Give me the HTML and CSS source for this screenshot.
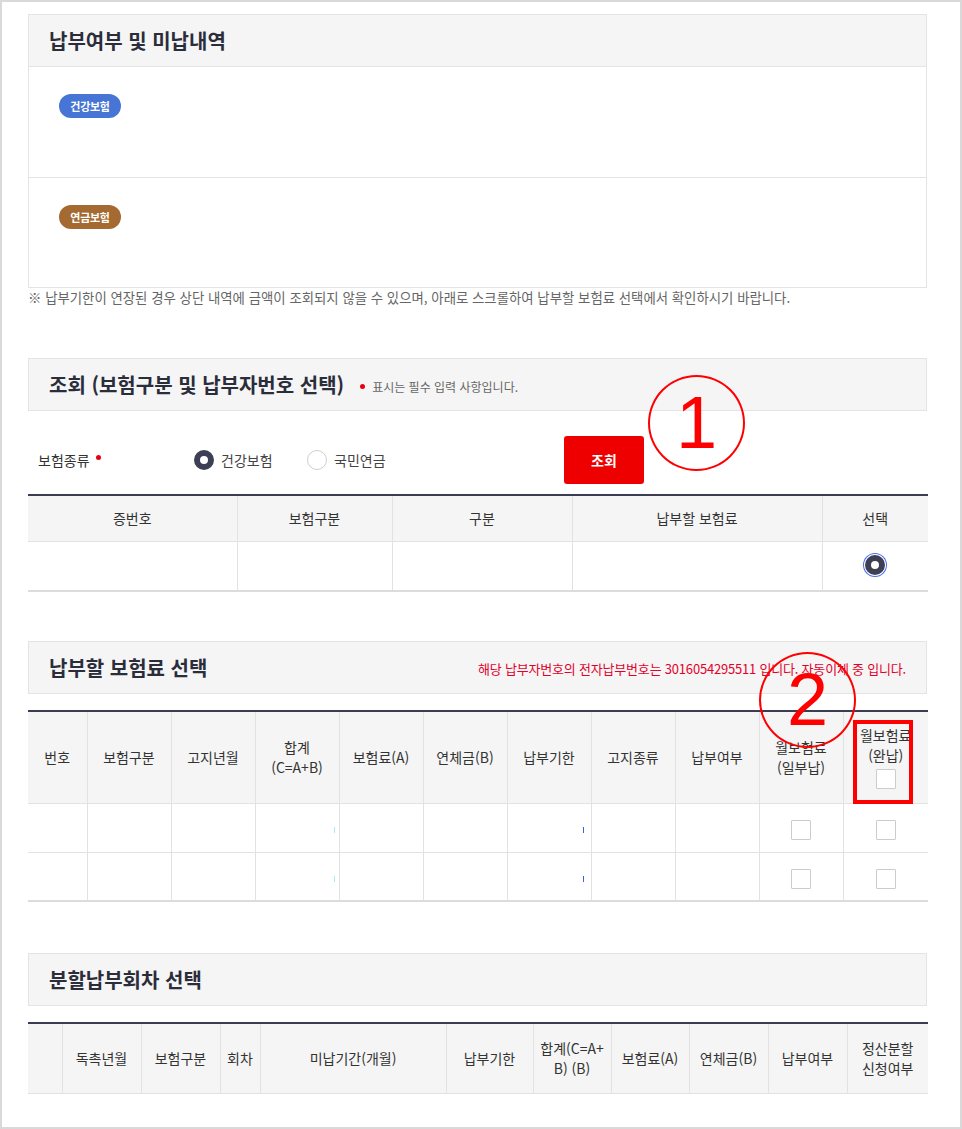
FILE: index.html
```html
<!DOCTYPE html>
<html lang="ko">
<head>
  <meta charset="UTF-8">
  <title>납부여부 및 미납내역</title>
  <link rel="stylesheet" href="styles.css">
</head>
<body>
  <div class="page">

    <!-- 납부여부 및 미납내역 -->
    <div class="sec-head">
      <h2 class="sec-title">납부여부 및 미납내역</h2>
    </div>
    <div class="status-box">
      <div class="status-row"><span class="badge health">건강보험</span></div>
      <div class="status-row"><span class="badge pension">연금보험</span></div>
    </div>
    <p class="note">※ 납부기한이 연장된 경우 상단 내역에 금액이 조회되지 않을 수 있으며, 아래로 스크롤하여 납부할 보험료 선택에서 확인하시기 바랍니다.</p>

    <!-- 조회 -->
    <div class="sec-head sec-search">
      <h2 class="sec-title">조회 (보험구분 및 납부자번호 선택)</h2>
      <span class="req-note"><i class="req-dot"></i>표시는 필수 입력 사항입니다.</span>
    </div>
    <div class="search-row">
      <div class="field-label">보험종류<i class="req-dot"></i></div>
      <label class="radio-item"><span class="radio checked"></span>건강보험</label>
      <label class="radio-item"><span class="radio"></span>국민연금</label>
      <button class="btn-search" type="button">조회</button>
    </div>
    <table class="grid grid-select">
      <colgroup>
        <col style="width:209px"><col style="width:155px"><col style="width:180px"><col style="width:250px"><col>
      </colgroup>
      <thead>
        <tr><th>증번호</th><th>보험구분</th><th>구분</th><th>납부할 보험료</th><th>선택</th></tr>
      </thead>
      <tbody>
        <tr><td></td><td></td><td></td><td></td><td><span class="radio checked focused"></span></td></tr>
      </tbody>
    </table>

    <!-- 납부할 보험료 선택 -->
    <div class="sec-head sec-pay">
      <h2 class="sec-title">납부할 보험료 선택</h2>
      <span class="pay-info">해당 납부자번호의 전자납부번호는 3016054295511 입니다. 자동이체 중 입니다.</span>
    </div>
    <table class="grid grid-pay">
      <colgroup>
        <col style="width:59px"><col style="width:84px"><col style="width:84px"><col style="width:84px"><col style="width:84px"><col style="width:84px"><col style="width:84px"><col style="width:84px"><col style="width:84px"><col style="width:84px"><col>
      </colgroup>
      <thead>
        <tr>
          <th>번호</th><th>보험구분</th><th>고지년월</th><th>합계<br>(C=A+B)</th><th>보험료(A)</th><th>연체금(B)</th>
          <th>납부기한</th><th>고지종류</th><th>납부여부</th><th>월보험료<br>(일부납)</th>
          <th>월보험료<br>(완납)<br><span class="check head-check"></span></th>
        </tr>
      </thead>
      <tbody>
        <tr><td></td><td></td><td></td><td class="num"><i class="tick light"></i></td><td></td><td></td><td class="num due"><i class="tick"></i></td><td></td><td></td><td><span class="check"></span></td><td><span class="check"></span></td></tr>
        <tr><td></td><td></td><td></td><td class="num"><i class="tick light"></i></td><td></td><td></td><td class="num due"><i class="tick"></i></td><td></td><td></td><td><span class="check"></span></td><td><span class="check"></span></td></tr>
      </tbody>
    </table>

    <!-- 분할납부회차 선택 -->
    <div class="sec-head sec-split">
      <h2 class="sec-title">분할납부회차 선택</h2>
    </div>
    <table class="grid grid-split">
      <colgroup>
        <col style="width:34px"><col style="width:79px"><col style="width:79px"><col style="width:40px"><col style="width:186px"><col style="width:87px"><col style="width:78px"><col style="width:78px"><col style="width:79px"><col style="width:79px"><col>
      </colgroup>
      <thead>
        <tr>
          <th></th><th>독촉년월</th><th>보험구분</th><th>회차</th><th>미납기간(개월)</th><th>납부기한</th>
          <th>합계(C=A+<br>B) (B)</th><th>보험료(A)</th><th>연체금(B)</th><th>납부여부</th><th>정산분할<br>신청여부</th>
        </tr>
      </thead>
    </table>

    <!-- 안내 표시 -->
    <div class="mark mark-1">1</div>
    <div class="mark mark-2">2</div>
    <div class="mark-box"></div>
  </div>
</body>
</html>
```

FILE: styles.css
```css
* {
  box-sizing: border-box;
}

body {
  margin: 0;
  font-family: "Noto Sans CJK KR", "Noto Sans", sans-serif;
  color: #333333;
  background: #ffffff;
}

.page {
  position: relative;
  width: 962px;
  height: 1129px;
  border: 2px solid #d9d9d9;
  padding: 12px 33px 0 26px;
  overflow: hidden;
}

/* 섹션 헤더 */
.sec-head {
  display: flex;
  align-items: center;
  height: 53px;
  padding: 0 20px;
  background: #f5f5f5;
  border: 1px solid #e4e4e4;
}

.sec-title {
  margin: 0;
  font-size: 20px;
  font-weight: 700;
  color: #2b2d3a;
}

/* 납부여부 및 미납내역 */
.status-box {
  border: 1px solid #e4e4e4;
  border-top: none;
}

.status-row {
  height: 110px;
  padding: 25px 0 0 30px;
}

.status-row + .status-row {
  border-top: 1px solid #e4e4e4;
}

.badge {
  display: inline-flex;
  align-items: center;
  justify-content: center;
  width: 62px;
  height: 24px;
  border-radius: 12px;
  font-size: 11px;
  font-weight: 700;
  color: #ffffff;
  letter-spacing: -0.3px;
}

.badge.health {
  background: #4775d6;
}

.badge.pension {
  background: #a46a31;
}

.note {
  margin: 0;
  font-size: 13.4px;
  line-height: 18px;
  color: #666666;
}

/* 조회 */
.sec-search {
  margin-top: 52px;
}

.req-note {
  display: flex;
  align-items: center;
  margin-left: 16px;
  padding-top: 3px;
  font-size: 12px;
  color: #666666;
}

.req-dot {
  display: inline-block;
  width: 5px;
  height: 5px;
  border-radius: 50%;
  background: #e60012;
  margin-right: 7px;
}

.search-row {
  display: flex;
  align-items: center;
  height: 83px;
  padding: 15px 0 0 10px;
}

.field-label {
  display: flex;
  align-items: flex-start;
  width: 156px;
  font-size: 14px;
  color: #333333;
}

.field-label .req-dot {
  margin: 5px 0 0 6px;
}

.radio-item {
  display: flex;
  align-items: center;
  gap: 7px;
  width: 113px;
  font-size: 14px;
  color: #444444;
}

.radio {
  display: inline-block;
  width: 20px;
  height: 20px;
  border: 1px solid #cfcfcf;
  border-radius: 50%;
  background: #ffffff;
}

.radio.checked {
  border: 6px solid #3d3f55;
  background: #ffffff;
}

.radio.focused {
  box-shadow: 0 0 0 1px #ffffff, 0 0 0 2px #4a6cf5;
}

.btn-search {
  margin-left: 144px;
  width: 80px;
  height: 48px;
  border: none;
  border-radius: 3px;
  background: #ee0000;
  color: #ffffff;
  font-family: inherit;
  font-size: 14px;
  font-weight: 700;
}

/* 그리드 공통 */
.grid {
  width: 900px;
  border-collapse: collapse;
  table-layout: fixed;
  border-top: 2px solid #3b3e52;
}

.grid th {
  background: #f5f5f5;
  font-size: 14px;
  font-weight: 400;
  color: #333333;
  line-height: 20px;
  text-align: center;
  border-left: 1px solid #e2e2e2;
  border-bottom: 1px solid #e2e2e2;
  padding: 0;
}

.grid td {
  text-align: center;
  border-left: 1px solid #e2e2e2;
  border-bottom: 1px solid #e2e2e2;
  padding: 0;
}

.grid th:first-child,
.grid td:first-child {
  border-left: none;
}

.grid-select th {
  height: 46px;
}

.grid-select td {
  height: 50px;
  padding-top: 4px;
}

.grid-select tbody tr:last-child td {
  border-bottom: 2px solid #dcdcdc;
}

/* 납부할 보험료 선택 */
.sec-pay {
  margin-top: 49px;
  justify-content: space-between;
}

.pay-info {
  font-size: 13px;
  color: #e4002b;
  letter-spacing: -0.2px;
  padding-top: 2px;
}

.grid-pay {
  margin-top: 16px;
}

.grid-pay th {
  height: 92px;
}

.grid-pay td {
  height: 49px;
}

.grid-pay tbody tr:last-child td {
  border-bottom: 2px solid #dcdcdc;
}

.grid-pay td.num {
  text-align: right;
  padding-right: 4px;
}

.grid-pay td.due {
  padding-right: 7px;
}

.tick {
  display: inline-block;
  width: 1px;
  height: 6px;
  background: #3a63d8;
  vertical-align: middle;
}

.tick.light {
  background: #a9ecf5;
}

.check {
  display: inline-block;
  width: 20px;
  height: 20px;
  border: 1px solid #cccccc;
  border-radius: 1px;
  background: #ffffff;
  vertical-align: middle;
}

.head-check {
  margin-top: 4px;
}

/* 분할납부회차 선택 */
.sec-split {
  margin-top: 51px;
}

.grid-split {
  margin-top: 16px;
}

.grid-split th {
  height: 70px;
}

/* 안내 표시 (빨간 원 번호, 강조 박스) */
.mark {
  position: absolute;
  width: 97px;
  height: 96px;
  border: 2px solid #ff0000;
  border-radius: 50%;
  font-family: "Liberation Sans", Arial, sans-serif;
  font-size: 74px;
  line-height: 92px;
  text-align: center;
  color: #ff0000;
}

.mark-1 {
  left: 646px;
  top: 373px;
}

.mark-2 {
  left: 757px;
  top: 650px;
}

.mark-box {
  position: absolute;
  left: 851px;
  top: 718px;
  width: 60px;
  height: 84px;
  border: 4px solid #ff0000;
}
```
